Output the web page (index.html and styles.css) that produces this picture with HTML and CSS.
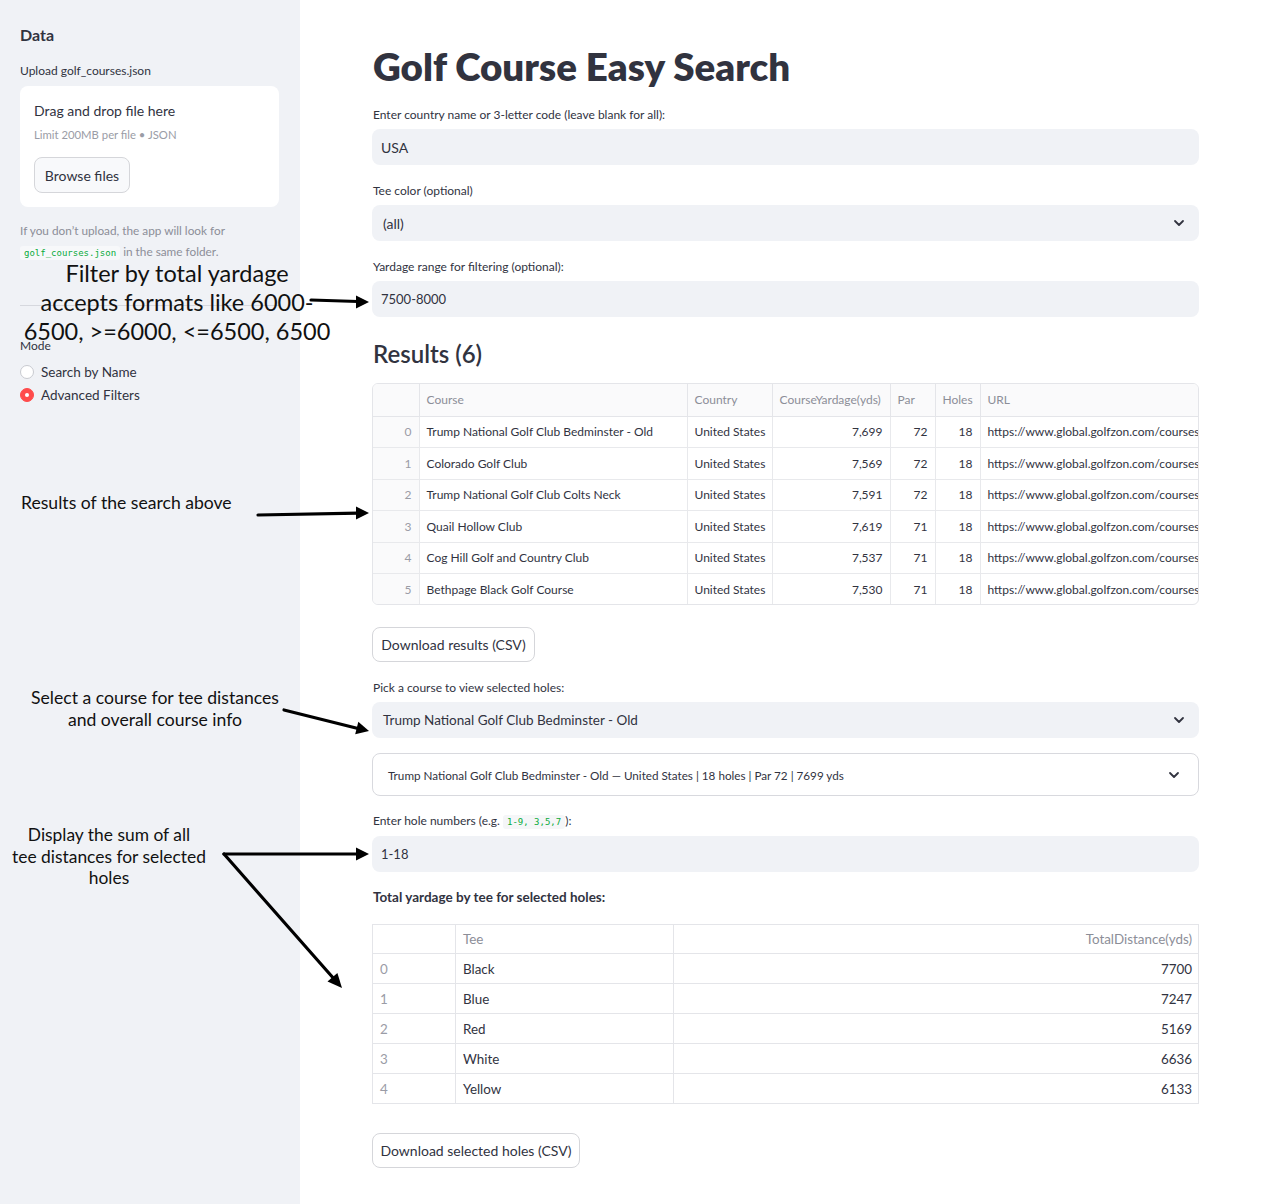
FILE: index.html
```html
<!DOCTYPE html>
<html lang="en">
<head>
<meta charset="utf-8">
<title>Golf Course Easy Search</title>
<link rel="stylesheet" href="styles.css">
</head>
<body>
<div class="app">
  <aside class="sidebar">
    <h2 class="side-title">Data</h2>
    <div class="field-label">Upload golf_courses.json</div>
    <div class="uploader">
      <div class="drop-title">Drag and drop file here</div>
      <div class="drop-limit">Limit 200MB per file • JSON</div>
      <button class="btn btn-browse">Browse files</button>
    </div>
    <p class="side-caption">If you don’t upload, the app will look for<br><code class="code side-code">golf_courses.json</code> in the same folder.</p>
    <hr class="side-hr">
    <div class="field-label mode-label">Mode</div>
    <div class="radio-group">
      <div class="radio-row"><span class="radio"></span><span>Search by Name</span></div>
      <div class="radio-row"><span class="radio radio-on"></span><span>Advanced Filters</span></div>
    </div>
  </aside>

  <main class="main">
    <h1 class="title">Golf Course Easy Search</h1>

    <div class="field-label l1">Enter country name or 3-letter code (leave blank for all):</div>
    <div class="input">USA</div>

    <div class="field-label l2">Tee color (optional)</div>
    <div class="select"><span class="select-val">(all)</span>
      <svg class="chev" width="12" height="8" viewBox="0 0 12 8"><polyline points="2,2 6,6 10,2" fill="none" stroke="#31333f" stroke-width="1.8" stroke-linecap="round" stroke-linejoin="round"/></svg>
    </div>

    <div class="field-label l2">Yardage range for filtering (optional):</div>
    <div class="input input-sm">7500-8000</div>

    <h3 class="results">Results (6)</h3>

    <div class="df">
      <table class="df-table">
        <colgroup><col style="width:46px"><col style="width:268px"><col style="width:85px"><col style="width:118px"><col style="width:45px"><col style="width:45px"><col></colgroup>
        <thead><tr><th></th><th>Course</th><th>Country</th><th>CourseYardage(yds)</th><th>Par</th><th>Holes</th><th>URL</th></tr></thead>
        <tbody>
          <tr><td class="idx">0</td><td>Trump National Golf Club Bedminster - Old</td><td>United States</td><td class="num">7,699</td><td class="num">72</td><td class="num">18</td><td class="url">https://www.global.golfzon.com/courses/</td></tr>
          <tr><td class="idx">1</td><td>Colorado Golf Club</td><td>United States</td><td class="num">7,569</td><td class="num">72</td><td class="num">18</td><td class="url">https://www.global.golfzon.com/courses/</td></tr>
          <tr><td class="idx">2</td><td>Trump National Golf Club Colts Neck</td><td>United States</td><td class="num">7,591</td><td class="num">72</td><td class="num">18</td><td class="url">https://www.global.golfzon.com/courses/</td></tr>
          <tr><td class="idx">3</td><td>Quail Hollow Club</td><td>United States</td><td class="num">7,619</td><td class="num">71</td><td class="num">18</td><td class="url">https://www.global.golfzon.com/courses/</td></tr>
          <tr><td class="idx">4</td><td>Cog Hill Golf and Country Club</td><td>United States</td><td class="num">7,537</td><td class="num">71</td><td class="num">18</td><td class="url">https://www.global.golfzon.com/courses/</td></tr>
          <tr><td class="idx">5</td><td>Bethpage Black Golf Course</td><td>United States</td><td class="num">7,530</td><td class="num">71</td><td class="num">18</td><td class="url">https://www.global.golfzon.com/courses/</td></tr>
        </tbody>
      </table>
    </div>

    <button class="btn btn-dl">Download results (CSV)</button>

    <div class="field-label l3">Pick a course to view selected holes:</div>
    <div class="select select-course"><span class="select-val">Trump National Golf Club Bedminster - Old</span>
      <svg class="chev" width="12" height="8" viewBox="0 0 12 8"><polyline points="2,2 6,6 10,2" fill="none" stroke="#31333f" stroke-width="1.8" stroke-linecap="round" stroke-linejoin="round"/></svg>
    </div>

    <div class="expander"><span>Trump National Golf Club Bedminster - Old — United States | 18 holes | Par 72 | 7699 yds</span>
      <svg class="chev" width="12" height="8" viewBox="0 0 12 8"><polyline points="2,2 6,6 10,2" fill="none" stroke="#31333f" stroke-width="1.8" stroke-linecap="round" stroke-linejoin="round"/></svg>
    </div>

    <div class="field-label l4">Enter hole numbers (e.g. <code class="code">1-9, 3,5,7</code>):</div>
    <div class="input input-sm">1-18</div>

    <div class="bold-text">Total yardage by tee for selected holes:</div>

    <table class="tee-table">
      <colgroup><col style="width:83px"><col style="width:218px"><col></colgroup>
      <thead><tr><th></th><th>Tee</th><th class="num">TotalDistance(yds)</th></tr></thead>
      <tbody>
        <tr><td class="idx2">0</td><td>Black</td><td class="num">7700</td></tr>
        <tr><td class="idx2">1</td><td>Blue</td><td class="num">7247</td></tr>
        <tr><td class="idx2">2</td><td>Red</td><td class="num">5169</td></tr>
        <tr><td class="idx2">3</td><td>White</td><td class="num">6636</td></tr>
        <tr><td class="idx2">4</td><td>Yellow</td><td class="num">6133</td></tr>
      </tbody>
    </table>

    <button class="btn btn-dl2">Download selected holes (CSV)</button>
  </main>
</div>

<div class="note note-filter">Filter by total yardage<br>accepts formats like 6000-<br>6500, &gt;=6000, &lt;=6500, 6500</div>
<div class="note note-results">Results of the search above</div>
<div class="note note-select">Select a course for tee distances<br>and overall course info</div>
<div class="note note-sum">Display the sum of all<br>tee distances for selected<br>holes</div>

<svg class="arrows" width="1265" height="1204" viewBox="0 0 1265 1204">
  <g stroke="#000" stroke-width="3.2" fill="none" stroke-linecap="round">
    <line x1="311" y1="300" x2="358" y2="301.5"/>
    <line x1="258" y1="515" x2="358" y2="513.2"/>
    <line x1="284" y1="710" x2="358" y2="728.5"/>
    <line x1="224" y1="854" x2="358" y2="854"/>
    <line x1="224" y1="854" x2="335" y2="980"/>
  </g>
  <g fill="#000">
    <polygon points="369,302 356,295.5 356,308.5"/>
    <polygon points="369,513 356,506.5 356,519.5"/>
    <polygon points="369,731 358.3,721.7 355.2,734.3"/>
    <polygon points="369,854 356,847.5 356,860.5"/>
    <polygon points="342,988 327.5,981.5 337.4,973"/>
  </g>
</svg>
</body>
</html>
```
FILE: styles.css
```css
* { box-sizing: border-box; }
html, body { margin: 0; padding: 0; }
body {
  font-family: "Source Sans Pro", Lato, "Noto Sans", sans-serif;
  color: #31333f;
  background: #ffffff;
  width: 1265px;
  min-height: 1204px;
  position: relative;
}
.app { display: flex; min-height: 1204px; }

/* sidebar */
.sidebar {
  width: 300px;
  flex: 0 0 300px;
  background: #f0f2f6;
  padding: 23px 21px 0 20px;
  display: flex;
  flex-direction: column;
}
.side-title { margin: 0; font-size: 16px; line-height: 24px; font-weight: 700; }
.field-label { font-size: 12px; line-height: 18px; }
.sidebar .field-label { margin-top: 15px; }
.uploader {
  margin-top: 6px;
  background: #ffffff;
  border-radius: 8px;
  height: 121px;
  padding: 15px 14px 0 14px;
  display: flex;
  flex-direction: column;
  align-items: flex-start;
}
.drop-title { font-size: 14px; line-height: 20px; }
.drop-limit { font-size: 11.3px; line-height: 16px; color: #9a9ca6; margin-top: 6px; }
.btn {
  font-family: inherit;
  color: #31333f;
  background: #ffffff;
  border: 1px solid #d5d6da;
  border-radius: 8px;
  height: 36px;
  padding: 0 12px;
  font-size: 14px;
  cursor: pointer;
}
.btn-browse { margin-top: 14px; background: #f8f9fb; width: 96px; padding: 0; }
.side-caption {
  margin: 13px 0 0 0;
  font-size: 11.8px;
  line-height: 21px;
  color: #8c8e98;
  white-space: nowrap;
}
.code {
  font-family: "DejaVu Sans Mono", "Liberation Mono", monospace;
  font-size: 9px;
  color: #09ab3b;
  background: #f5f6f8;
  border-radius: 3px;
  padding: 2px 4px;
}
.side-code { background: #f7f8fa; }
.side-hr { border: none; border-top: 1px solid #d6d8de; margin: 41px 0 0 0; width: 100%; }
.sidebar .mode-label { margin-top: 31px; }
.radio-group { margin-top: 5px; display: flex; flex-direction: column; }
.radio-row { display: flex; align-items: center; height: 23px; font-size: 13.5px; gap: 7px; }
.radio {
  width: 14px; height: 14px; border-radius: 50%;
  border: 1px solid #c8cad0; background: #ffffff;
  flex: 0 0 14px;
}
.radio-on { background: #ff4b4b; border-color: #ff4b4b; position: relative; }
.radio-on::after {
  content: ""; position: absolute; left: 4px; top: 4px;
  width: 4px; height: 4px; border-radius: 50%; background: #fff;
}

/* main */
.main {
  flex: 1;
  padding: 40px 66px 0 72px;
  display: flex;
  flex-direction: column;
  align-items: stretch;
}
.title {
  margin: 0;
  font-size: 38.5px;
  line-height: 52px;
  font-weight: 800;
  padding-left: 1px;
}
.l1 { margin-top: 14px; }
.l2 { margin-top: 17px; }
.l3 { margin-top: 17px; }
.l4 { margin-top: 16px; }
.main .field-label { padding-left: 1px; }
.input, .select {
  margin-top: 5px;
  height: 36px;
  background: #f0f2f6;
  border-radius: 8px;
  display: flex;
  align-items: center;
  padding: 0 9px;
  font-size: 14px;
}
.input-sm { font-size: 13px; }
.select { padding: 0 14px 0 11px; justify-content: space-between; }
.select-course { font-size: 13.5px; }
.chev { flex: 0 0 12px; }
.results {
  margin: 21px 0 0 0;
  font-size: 24px;
  line-height: 32px;
  font-weight: 600;
  padding-left: 1px;
}
.df {
  margin-top: 13px;
  border: 1px solid #e4e5e9;
  border-radius: 6px;
  overflow: hidden;
  height: 222px;
}
.df-table {
  width: 100%;
  table-layout: fixed;
  border-collapse: collapse;
  font-size: 12px;
}
.df-table th {
  height: 32px;
  font-weight: 400;
  color: #8c8e98;
  text-align: left;
  padding: 0 7px;
  border-right: 1px solid #e4e5e9;
  border-bottom: 1px solid #e4e5e9;
  background: #fafafb;
  white-space: nowrap;
  overflow: hidden;
}
.df-table td {
  height: 31.5px;
  padding: 0 7px;
  border-right: 1px solid #e8e9ec;
  border-bottom: 1px solid #e8e9ec;
  white-space: nowrap;
  overflow: hidden;
}
.df-table tr:last-child td { border-bottom: none; }
.df-table th:last-child, .df-table td:last-child { border-right: none; }
.df-table .idx { text-align: right; color: #9a9ca6; background: #fafafb; }
.df-table .num { text-align: right; }
.df-table .url { text-overflow: clip; }

.btn-dl { margin-top: 22px; align-self: flex-start; width: 163px; height: 35px; padding: 0; }
.expander {
  margin-top: 15px;
  height: 43px;
  border: 1px solid #d8d9de;
  border-radius: 8px;
  display: flex;
  align-items: center;
  justify-content: space-between;
  padding: 0 18px 0 15px;
  font-size: 11.7px;
}
.bold-text { margin-top: 16px; font-size: 13.5px; line-height: 18px; font-weight: 700; padding-left: 1px; }
.tee-table {
  margin-top: 18px;
  width: 100%;
  table-layout: fixed;
  border-collapse: collapse;
  font-size: 13.4px;
}
.tee-table th, .tee-table td {
  border: 1px solid #e4e5e9;
  padding: 0 6px 0 7px;
  text-align: left;
}
.tee-table th { height: 29px; font-weight: 400; color: #8c8e98; }
.tee-table td { height: 30px; }
.tee-table .num { text-align: right; }
.tee-table .idx2 { color: #9a9ca6; }
.btn-dl2 { margin-top: 29px; align-self: flex-start; width: 208px; height: 35px; padding: 0; }

/* annotations */
.note {
  position: absolute;
  font-family: Lato, "Open Sans", sans-serif;
  color: #111111;
  text-align: center;
  white-space: nowrap;
}
.note-filter { left: 2px; top: 259px; width: 350px; font-size: 23.5px; line-height: 29px; }
.note-results { left: 21px; top: 492px; width: 220px; font-size: 17.6px; line-height: 22px; text-align: left; }
.note-select { left: 10px; top: 687px; width: 290px; font-size: 17.6px; line-height: 22px; }
.note-sum { left: 0; top: 824px; width: 218px; font-size: 17.4px; line-height: 21.5px; }
.arrows { position: absolute; left: 0; top: 0; pointer-events: none; }
```
